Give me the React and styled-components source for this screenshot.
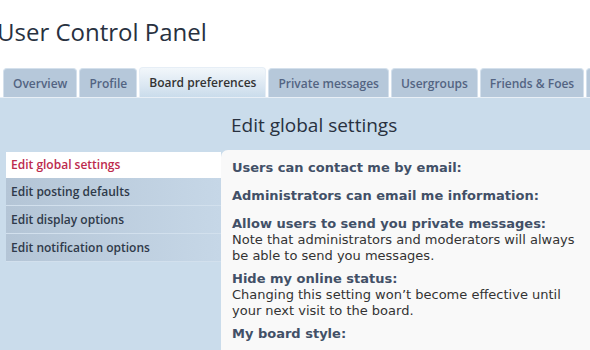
import React from 'react';
import styled, { createGlobalStyle } from 'styled-components';

const GlobalStyle = createGlobalStyle`
  html, body {
    margin: 0;
    padding: 0;
    background: #fff;
    overflow: hidden;
  }
  body {
    font-family: "DejaVu Sans", Verdana, sans-serif;
  }
`;

const tabs = [
  'Overview',
  'Profile',
  'Board preferences',
  'Private messages',
  'Usergroups',
  'Friends & Foes',
  'Attachments',
];

const menuItems = [
  'Edit global settings',
  'Edit posting defaults',
  'Edit display options',
  'Edit notification options',
];

const App = () => {
  return (
    <>
      <GlobalStyle />
      <Page>
        <Title>User Control Panel</Title>
        <TabBar>
          {tabs.map((t, i) => (
            <Tab key={t} active={i === 2}>{t}</Tab>
          ))}
        </TabBar>
        <Panel>
          <Menu>
            {menuItems.map((m, i) => (
              <MenuItem key={m} active={i === 0}>{m}</MenuItem>
            ))}
          </Menu>
          <Main>
            <Heading>Edit global settings</Heading>
            <Content>
              <Row>
                <Label>Users can contact me by email:</Label>
              </Row>
              <Row>
                <Label>Administrators can email me information:</Label>
              </Row>
              <Row>
                <Label>Allow users to send you private messages:</Label>
                <Explain>Note that administrators and moderators will always be able to send you messages.</Explain>
              </Row>
              <Row>
                <Label>Hide my online status:</Label>
                <Explain>Changing this setting won’t become effective until your next visit to the board.</Explain>
              </Row>
              <Row>
                <Label>My board style:</Label>
              </Row>
            </Content>
          </Main>
        </Panel>
      </Page>
    </>
  );
};

const Page = styled.div`
  width: 600px;
  height: 350px;
  display: flex;
  flex-direction: column;
`;

const Title = styled.h2`
  margin: 15px 0 0 -3px;
  font-family: "Open Sans", sans-serif;
  font-weight: normal;
  font-size: 24px;
  line-height: 33px;
  color: #28313f;
`;

const TabBar = styled.ul`
  display: flex;
  align-items: flex-end;
  gap: 2px;
  list-style: none;
  margin: 19px 0 0 3px;
  padding: 0;
  height: 30px;
`;

const Tab = styled.li`
  flex-shrink: 0;
  height: ${(p) => (p.active ? '30px' : '29px')};
  box-sizing: border-box;
  padding: 0 9px;
  display: flex;
  align-items: center;
  font-family: "Open Sans", sans-serif;
  font-weight: 600;
  font-size: 12px;
  color: ${(p) => (p.active ? '#333' : '#536482')};
  border-radius: 4px 4px 0 0;
  border: 1px solid ${(p) => (p.active ? '#e6eef6' : '#d4e0ec')};
  border-bottom: none;
  background: ${(p) =>
    p.active
      ? 'linear-gradient(to bottom, #f2f7fb 0%, #dbe7f2 60%, #cadceb 100%)'
      : '#b6c8da'};
`;

const Panel = styled.div`
  flex: 1;
  display: flex;
  background: #cadceb;
  border-top: 1px solid #e8eff6;
`;

const Menu = styled.ul`
  list-style: none;
  margin: 54px 0 0 6px;
  padding: 0;
  width: 215px;
  display: flex;
  flex-direction: column;
`;

const MenuItem = styled.li`
  height: 28px;
  box-sizing: border-box;
  padding: 0 5px;
  display: flex;
  align-items: center;
  font-family: "Open Sans", sans-serif;
  font-weight: 600;
  font-size: 12px;
  color: ${(p) => (p.active ? '#bc2a4d' : '#2f3a4a')};
  background: ${(p) =>
    p.active ? '#ffffff' : 'linear-gradient(to right, #b4c5d6 0%, #c6d7e7 100%)'};
  border-bottom: 1px solid ${(p) => (p.active ? '#ffffff' : '#d2e0ed')};
  &:first-child {
    height: 26px;
  }
`;

const Main = styled.div`
  flex: 1;
  display: flex;
  flex-direction: column;
`;

const Heading = styled.h2`
  margin: 14px 0 0 10px;
  font-family: "Open Sans", sans-serif;
  font-weight: normal;
  font-size: 19px;
  line-height: 26px;
  color: #28313f;
`;

const Content = styled.div`
  flex: 1;
  margin-top: 12px;
  padding: 6px 0 0 11px;
  background: #f9f9f9;
  border-radius: 7px 0 0 0;
`;

const Row = styled.div`
  min-height: 28px;
  box-sizing: border-box;
  padding: 4px 0 3px;
  font-size: 13px;
  line-height: 16px;
`;

const Label = styled.div`
  font-weight: bold;
  color: #425067;
`;

const Explain = styled.div`
  color: #333;
  width: 350px;
`;

export default App;
